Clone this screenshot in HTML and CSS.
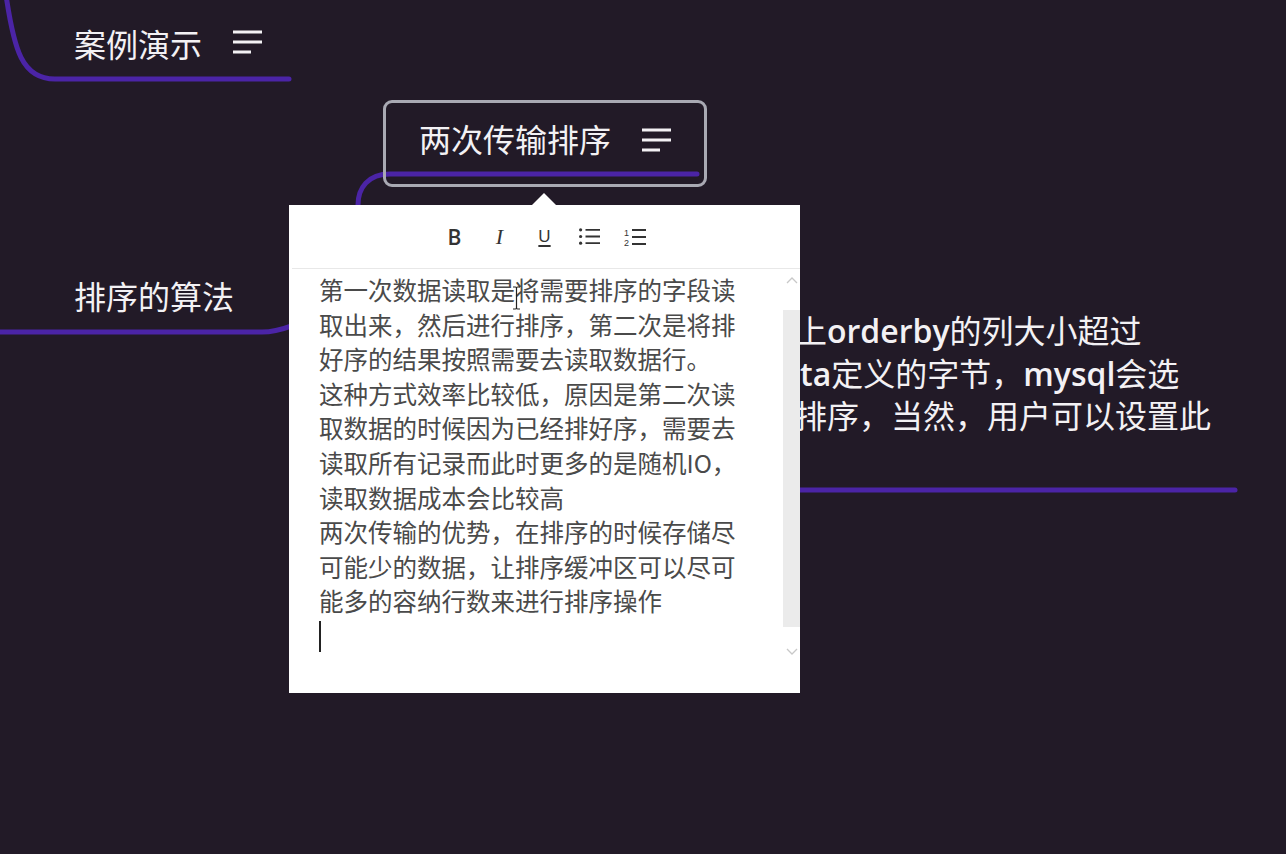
FILE: index.html
```html
<!DOCTYPE html>
<html lang="zh-CN">
<head>
<meta charset="utf-8">
<title>两次传输排序</title>
<link rel="stylesheet" href="styles.css">
</head>
<body>
<div class="canvas">
  <svg class="edges" width="1286" height="854" viewBox="0 0 1286 854">
    <path d="M6 -5 C 14 50, 22 79, 55 79 H 289"/>
    <path d="M-5 332 H 262 C 295 332, 358 300, 358 240 V 205 C 358 188, 368 174, 390 174 H 697"/>
    <path d="M700 490 H 1235"/>
  </svg>

  <div class="node node-case">
    <span class="node-text">案例演示</span>
    <svg class="menu-icon" width="29" height="24" viewBox="0 0 29 24"><path d="M0 2 H29 M0 12 H29 M0 22 H18"/></svg>
  </div>

  <div class="node node-algo">
    <span class="node-text">排序的算法</span>
  </div>

  <div class="node-note">
    <div class="note-line">上<span class="latin">orderby</span>的列大小超过</div>
    <div class="note-line note-indent"><span class="latin">ta</span>定义的字节，<span class="latin">mysql</span>会选</div>
    <div class="note-line">排序，当然，用户可以设置此</div>
  </div>

  <div class="node node-selected">
    <span class="node-text">两次传输排序</span>
    <svg class="menu-icon" width="29" height="24" viewBox="0 0 29 24"><path d="M0 2 H29 M0 12 H29 M0 22 H18"/></svg>
  </div>

  <div class="popup">
    <div class="toolbar">
      <button class="tool tool-b">B</button>
      <button class="tool tool-i">I</button>
      <button class="tool tool-u">U</button>
      <button class="tool">
        <svg width="21" height="17" viewBox="0 0 21 17"><circle cx="1.6" cy="1.8" r="1.6"/><circle cx="1.6" cy="8.5" r="1.6"/><circle cx="1.6" cy="15.2" r="1.6"/><path d="M6.5 1.8 H21 M6.5 8.5 H21 M6.5 15.2 H21"/></svg>
      </button>
      <button class="tool">
        <svg width="22" height="18" viewBox="0 0 22 18"><text x="0" y="7.5" class="num">1</text><text x="0" y="17.5" class="num">2</text><path d="M8 2 H22 M8 9 H22 M8 16 H22"/></svg>
      </button>
    </div>
    <div class="editor">
      <div class="editor-text">
        <p>第一次数据读取是将需要排序的字段读取出来，然后进行排序，第二次是将排好序的结果按照需要去读取数据行。</p>
        <p>这种方式效率比较低，原因是第二次读取数据的时候因为已经排好序，需要去读取所有记录而此时更多的是随机IO，</p>
        <p>读取数据成本会比较高</p>
        <p>两次传输的优势，在排序的时候存储尽可能少的数据，让排序缓冲区可以尽可能多的容纳行数来进行排序操作</p>
        <p class="caret-line"><span class="caret"></span></p>
      </div>
      <div class="scrollbar">
        <svg class="arrow" width="12" height="8" viewBox="0 0 12 8"><path d="M1 7 L6 2 L11 7"/></svg>
        <div class="track"></div>
        <svg class="arrow arrow-down" width="12" height="8" viewBox="0 0 12 8"><path d="M1 1 L6 6 L11 1"/></svg>
      </div>
    </div>
    <svg class="ibeam" width="9" height="24" viewBox="0 0 9 24"><path d="M1 1 H3.5 Q4.5 1 4.5 2.5 V21.5 Q4.5 23 3.5 23 H1 M8 1 H5.5 Q4.5 1 4.5 2.5 M4.5 21.5 Q4.5 23 5.5 23 H8"/></svg>
  </div>
</div>
</body>
</html>
```

FILE: styles.css
```css
* { box-sizing: border-box; }

html, body {
  margin: 0;
  padding: 0;
  background: #221a27;
}

.canvas {
  position: relative;
  width: 1286px;
  height: 854px;
  overflow: hidden;
  background: #221a27;
  font-family: "Noto Sans CJK SC", "Noto Sans", sans-serif;
}

.edges {
  position: absolute;
  left: 0;
  top: 0;
}

.edges path {
  fill: none;
  stroke: #4b24a6;
  stroke-width: 5;
  stroke-linecap: round;
}

.node {
  position: absolute;
  display: flex;
  align-items: center;
  gap: 31px;
  color: #f3f1f4;
}

.node-text {
  font-size: 32px;
  line-height: 32px;
  white-space: nowrap;
}

.menu-icon {
  margin-top: -3px;
}

.menu-icon path {
  stroke: #f3f1f4;
  stroke-width: 3;
  fill: none;
}

.node-case {
  left: 74px;
  top: 27px;
}

.node-algo {
  left: 74px;
  top: 279px;
}

.node-selected {
  left: 383px;
  top: 100px;
  width: 324px;
  height: 87px;
  border: 3px solid #a9a9b3;
  border-radius: 9px;
  padding: 19px 0 0 33px;
  align-items: flex-start;
}

.node-selected .menu-icon {
  margin-top: 6px;
}

.node-note {
  position: absolute;
  left: 795px;
  top: 309px;
  color: #f3f1f4;
  font-family: "Noto Sans CJK SC", sans-serif;
  font-weight: 400;
  font-size: 32px;
  line-height: 41.5px;
  white-space: nowrap;
}

.latin {
  font-family: "Open Sans", "Noto Sans", sans-serif;
  font-weight: 600;
}

.note-indent {
  padding-left: 5px;
}

.popup {
  position: absolute;
  left: 289px;
  top: 205px;
  width: 511px;
  height: 488px;
  background: #ffffff;
  display: flex;
  flex-direction: column;
}

.popup::before {
  content: "";
  position: absolute;
  left: 243px;
  top: -12px;
  border-left: 12px solid transparent;
  border-right: 12px solid transparent;
  border-bottom: 12px solid #ffffff;
}

.toolbar {
  height: 64px;
  margin-left: 3px;
  border-bottom: 1px solid #e8e8e8;
  display: flex;
  justify-content: center;
  align-items: center;
  padding-right: 3px;
}

.tool {
  width: 45px;
  height: 30px;
  border: 0;
  padding: 0;
  background: transparent;
  display: flex;
  align-items: center;
  justify-content: center;
  color: #333333;
}

.tool svg path {
  stroke: #333333;
  stroke-width: 1.8;
  fill: none;
}

.tool svg circle {
  fill: #333333;
}

.tool svg .num {
  font-family: "Liberation Sans", sans-serif;
  font-size: 9px;
  fill: #333333;
}

.tool-b {
  font-family: "Open Sans", "Liberation Sans", sans-serif;
  font-weight: 600;
  font-size: 21px;
}

.tool-i {
  font-family: "Liberation Serif", serif;
  font-style: italic;
  font-size: 22px;
}

.tool-u {
  font-family: "Liberation Sans", sans-serif;
  font-size: 17px;
  text-decoration: underline;
  text-underline-offset: 3px;
  text-decoration-thickness: 1.5px;
}

.editor {
  flex: 1;
  display: flex;
  min-height: 0;
}

.editor-text {
  flex: 1;
  padding: 4px 0 0 30px;
}

.editor-text p {
  margin: 0;
  width: 425px;
  font-size: 24.5px;
  line-height: 34.6px;
  color: #4a4a4a;
}

.caret-line {
  height: 34.6px;
  display: flex;
  align-items: center;
}

.caret {
  display: block;
  width: 1.5px;
  height: 31px;
  background: #222222;
}

.scrollbar {
  width: 17px;
  display: flex;
  flex-direction: column;
  align-items: center;
  padding-top: 7px;
}

.arrow path {
  fill: none;
  stroke: #c8c8c8;
  stroke-width: 1.3;
}

.track {
  width: 17px;
  height: 317px;
  margin-top: 26px;
  background: #ebebeb;
}

.arrow-down {
  margin-top: 21px;
}

.ibeam {
  position: absolute;
  left: 223px;
  top: 81px;
}

.ibeam path {
  fill: none;
  stroke: #222222;
  stroke-width: 1.2;
}
```
